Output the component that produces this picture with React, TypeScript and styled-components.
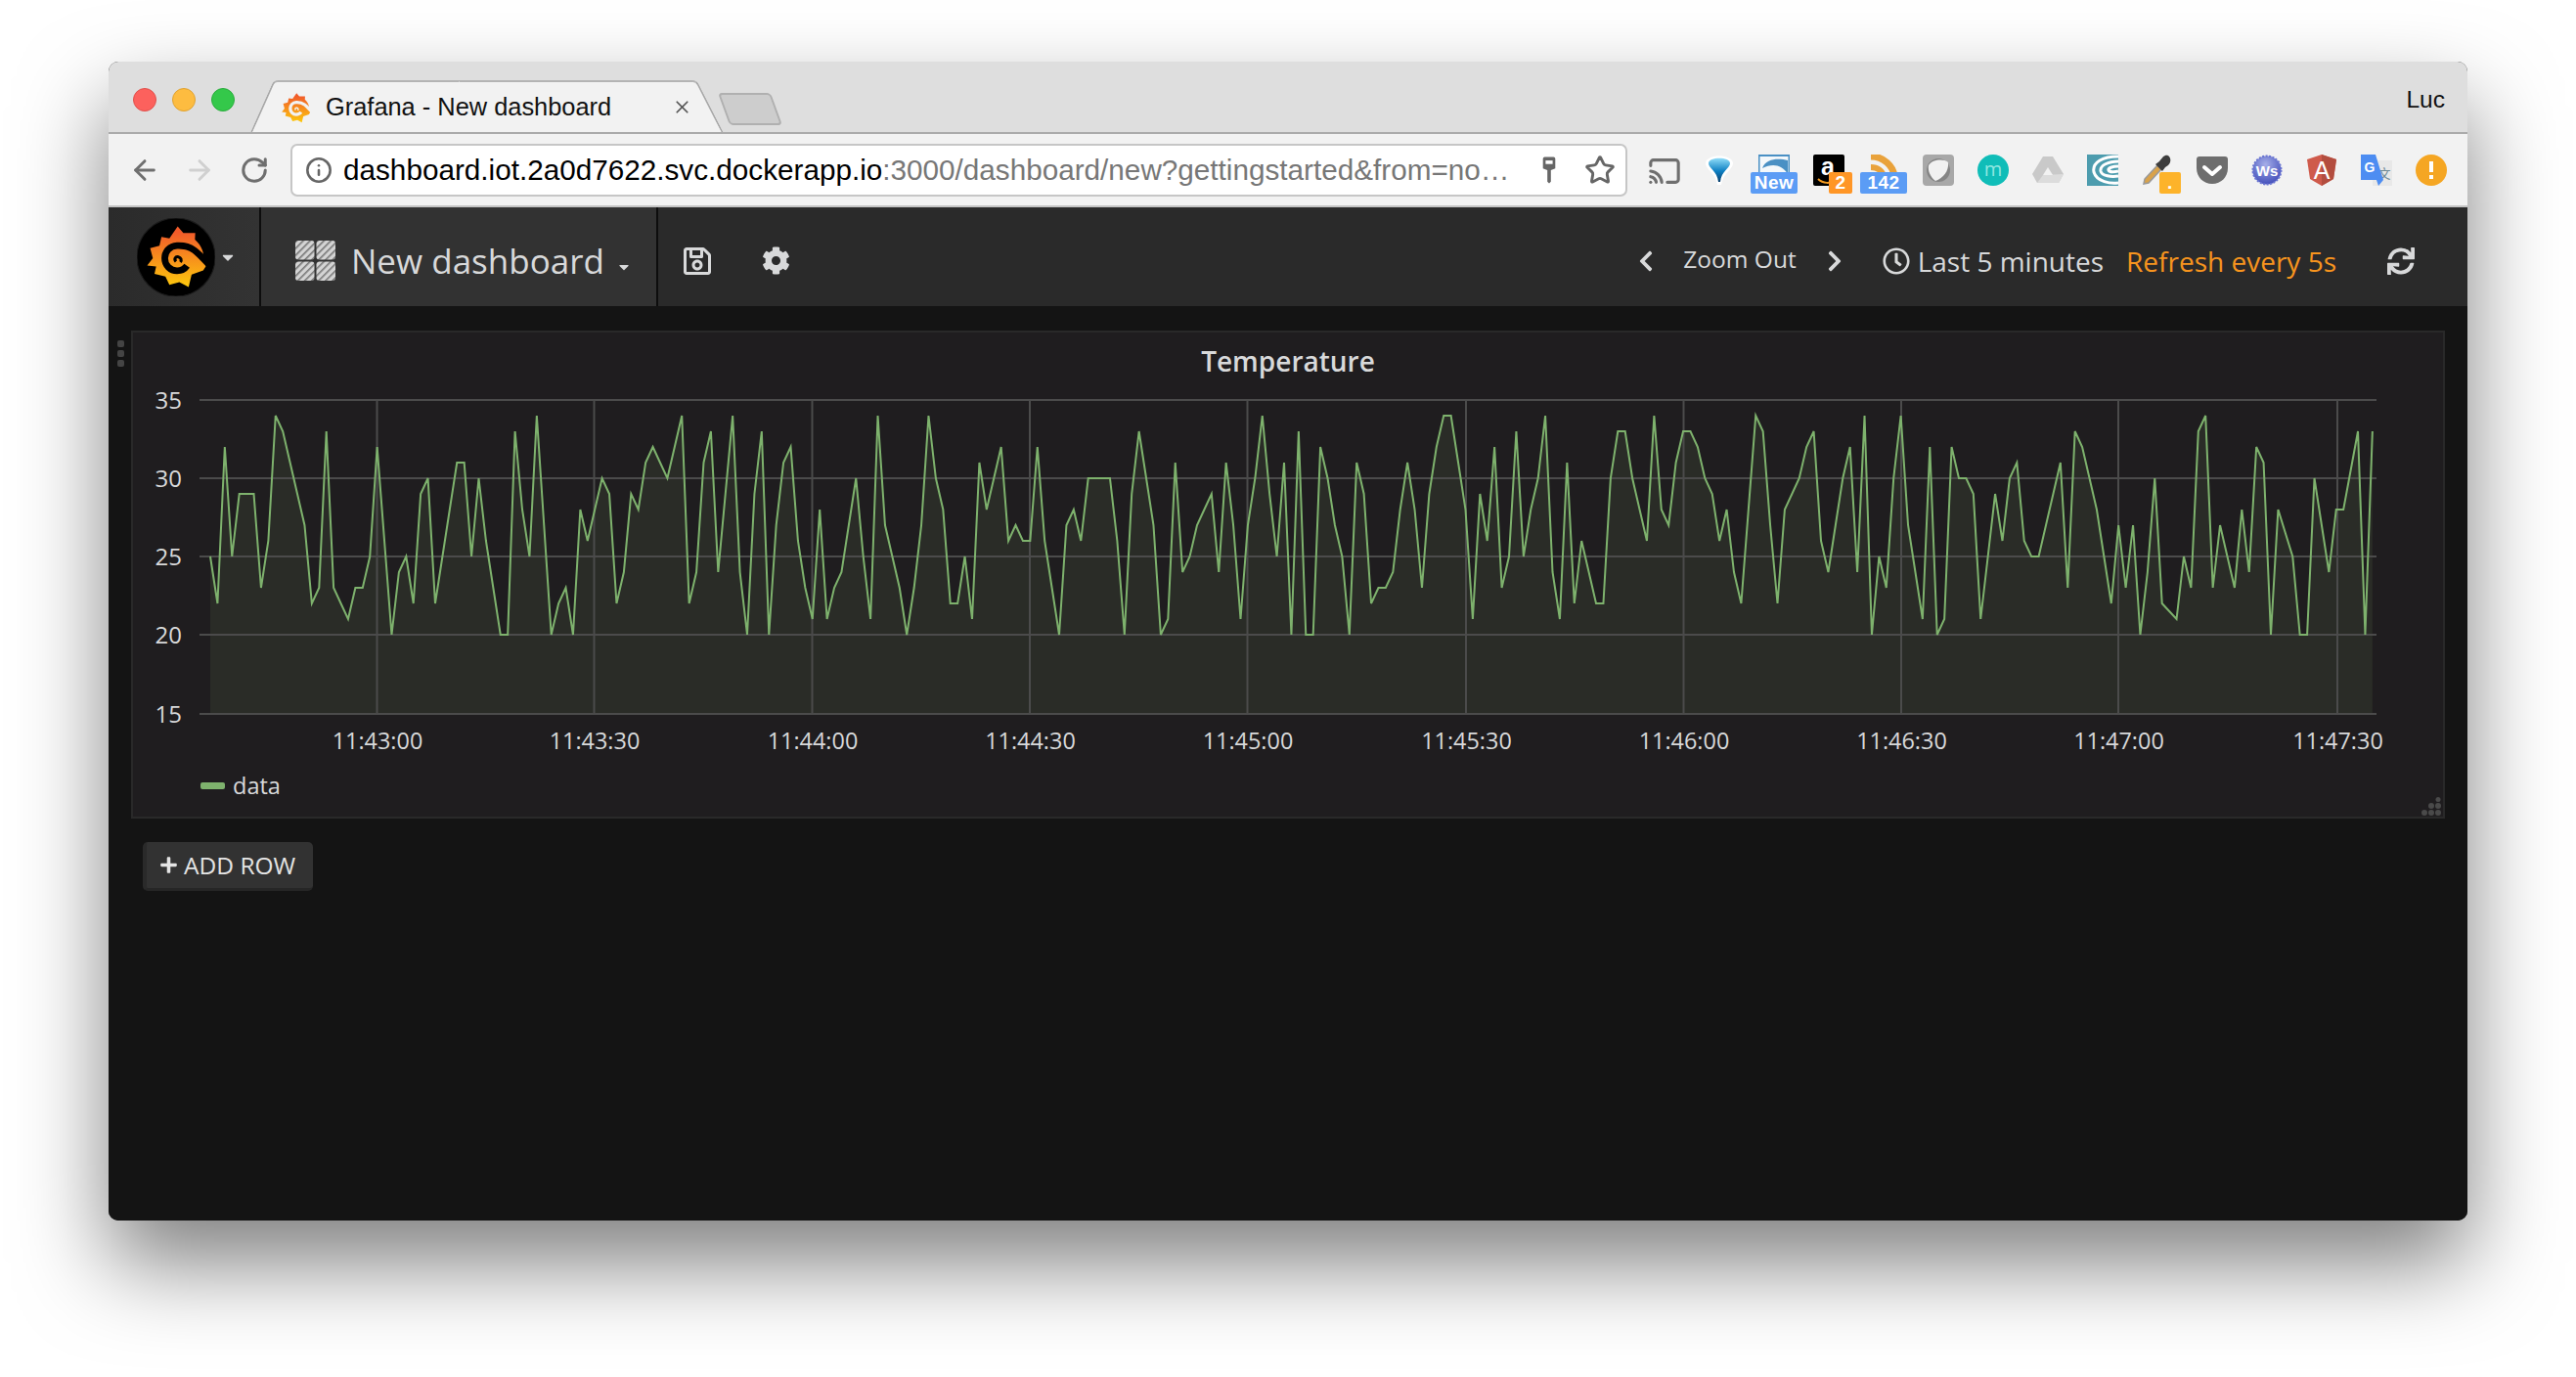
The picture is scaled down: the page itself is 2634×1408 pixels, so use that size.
import React from 'react';
import styled, { createGlobalStyle } from 'styled-components';
import { ArrowLeft, ArrowRight, Cast, Info, RotateCw, Star, X } from 'lucide-react';
import {
  FaCaretDown,
  FaChevronLeft,
  FaChevronRight,
  FaCog,
  FaPlus,
  FaRegClock,
  FaRegSave,
  FaSync,
} from 'react-icons/fa';

const GlobalStyle = createGlobalStyle`
  html, body {
    margin: 0;
    background: #fff;
    overflow: hidden;
  }
`;

const Page = styled.div`
  height: 1408px;
  padding: 63px 0 0 111px;
  box-sizing: border-box;
`;

const BrowserWindow = styled.div`
  width: 2412px;
  height: 1185px;
  display: flex;
  flex-direction: column;
  border-radius: 10px;
  background: #141414;
  box-shadow: 0 44px 90px rgba(0, 0, 0, 0.5);
`;

const TabStrip = styled.div`
  height: 74px;
  box-sizing: border-box;
  display: flex;
  align-items: flex-end;
  padding-left: 25px;
  background: #dedede;
  border-radius: 10px 10px 0 0;
  border-bottom: 2px solid #ababab;
  font-family: 'Liberation Sans', sans-serif;
`;

const TrafficLights = styled.div`
  align-self: flex-start;
  display: flex;
  gap: 16px;
  margin-top: 27px;
`;

const TrafficLight = styled.span<{ $color: string; $edge: string }>`
  width: 24px;
  height: 24px;
  box-sizing: border-box;
  border-radius: 50%;
  background: ${(props) => props.$color};
  border: 1px solid ${(props) => props.$edge};
`;

const Tab = styled.div`
  position: relative;
  width: 484px;
  height: 55px;
  margin: 0 0 -2px 16px;
  box-sizing: border-box;
  display: flex;
  align-items: center;
  padding: 0 32px 0 30px;
  font-size: 25.4px;
  color: #111;

  &::before,
  &::after {
    content: '';
    position: absolute;
    top: 0;
    bottom: 2px;
    width: 50%;
    background: #f2f2f2;
    border-top: 2px solid #b4b4b4;
  }

  &::before {
    left: 12px;
    transform: skewX(-24deg);
    border-left: 2px solid #a8a8a8;
    border-radius: 5px 0 0 0;
  }

  &::after {
    right: 14px;
    transform: skewX(27deg);
    border-right: 2px solid #a8a8a8;
    border-radius: 0 5px 0 0;
  }

  & > * {
    position: relative;
    z-index: 1;
  }
`;

const TabTitle = styled.span`
  margin-left: 15px;
  flex: 1;
  white-space: nowrap;
`;

const TabClose = styled.span`
  display: flex;
  color: #555;
`;

const NewTab = styled.div`
  width: 54px;
  height: 33px;
  margin-bottom: 7px;
  box-sizing: border-box;
  background: #cdcdcd;
  border: 2px solid #b0b0b0;
  border-radius: 4px;
  transform: skewX(20deg);
`;

const Profile = styled.span`
  margin: 6px 23px 0 auto;
  align-self: center;
  font-size: 24.5px;
  color: #111;
`;

const Toolbar = styled.div`
  height: 75px;
  box-sizing: border-box;
  display: flex;
  align-items: center;
  padding-left: 9px;
  background: #f2f2f2;
  border-bottom: 2px solid #c4c4c4;
  font-family: 'Liberation Sans', sans-serif;
`;

const NavButton = styled.span<{ $muted?: boolean }>`
  width: 56px;
  display: flex;
  justify-content: center;
  color: ${(props) => (props.$muted ? '#d0d0d0' : '#6f6f6f')};
`;

const AddressBar = styled.div`
  width: 1367px;
  height: 54px;
  margin: 0 10px 0 9px;
  box-sizing: border-box;
  display: flex;
  align-items: center;
  padding: 0 10px 0 13px;
  background: #fff;
  border: 2px solid #c6c6c6;
  border-radius: 7px;
  color: #666;
`;

const Url = styled.div`
  flex: 1;
  margin-left: 11px;
  font-size: 29.7px;
  line-height: 40px;
  white-space: nowrap;
  color: #777;

  b {
    font-weight: 400;
    color: #000;
  }
`;

const KeyIcon = styled.svg`
  width: 18px;
  height: 30px;
  margin-right: 27px;
`;

const StarIcon = styled.span`
  display: flex;
  color: #666;
`;

const Extensions = styled.div`
  display: flex;
`;

const Extension = styled.div`
  position: relative;
  width: 56px;
  height: 32px;
  display: flex;
  justify-content: center;

  svg {
    display: block;
  }
`;

const Badge = styled.span<{ $color: string; $left: number; $width: number }>`
  position: absolute;
  top: 18px;
  left: ${(props) => props.$left}px;
  width: ${(props) => props.$width}px;
  height: 22px;
  border-radius: 2px;
  background: ${(props) => props.$color};
  color: #fff;
  font: 700 19px/22px 'Liberation Sans', sans-serif;
  text-align: center;
  letter-spacing: 0.5px;
`;

const NavBar = styled.div`
  height: 101px;
  display: flex;
  align-items: stretch;
  background: #2a2a2a;
  color: #d8d9da;
  font-family: 'Open Sans', sans-serif;
`;

const LogoSection = styled.div`
  width: 156px;
  box-sizing: border-box;
  display: flex;
  align-items: center;
  padding-left: 29px;
  gap: 4px;
  background: linear-gradient(90deg, #2b2b2b, #333);
  border-right: 2px solid #0d0d0d;
`;

const LogoCaret = styled.span`
  display: flex;
  color: #d8d9da;
`;

const DashboardSection = styled.div`
  width: 406px;
  box-sizing: border-box;
  display: flex;
  align-items: center;
  padding: 8px 0 0 35px;
  background: #323232;
  border-right: 2px solid #0d0d0d;
`;

const DashboardTitle = styled.span`
  margin-left: 16px;
  font-size: 35px;
  white-space: nowrap;
`;

const TitleCaret = styled.span`
  display: flex;
  margin: 12px 0 0 12px;
`;

const ActionIcon = styled.span<{ $left: number }>`
  display: flex;
  align-items: center;
  padding-top: 8px;
  margin-left: ${(props) => props.$left}px;
`;

const RightControls = styled.div`
  margin-left: auto;
  padding: 8px 54px 0 0;
  display: flex;
  align-items: center;
`;

const ZoomLabel = styled.span`
  margin: 0 27px 0 26px;
  font-size: 24.5px;
  white-space: nowrap;
  position: relative;
  top: -2px;
`;

const ClockIcon = styled(FaRegClock)`
  margin: 0 8px 0 37px;
`;

const RangeLabel = styled.span`
  font-size: 28px;
  white-space: nowrap;
`;

const RefreshLabel = styled(RangeLabel)`
  margin: 0 52px 0 23px;
  color: #f7941e;
`;

const Dashboard = styled.div`
  flex: 1;
  position: relative;
  padding: 25px 23px 0;
  background: #141414;
  border-radius: 0 0 10px 10px;
  font-family: 'Open Sans', sans-serif;
  color: #d8d9da;
`;

const DragHandle = styled.div`
  position: absolute;
  left: 9px;
  top: 35px;
  display: flex;
  flex-direction: column;
  gap: 3px;

  span {
    width: 7px;
    height: 7px;
    border-radius: 2px;
    background: #444;
  }
`;

const Panel = styled.div`
  position: relative;
  height: 499px;
  box-sizing: border-box;
  display: flex;
  flex-direction: column;
  background: #1f1d1f;
  border: 2px solid #292929;
`;

const PanelTitle = styled.div`
  height: 55px;
  line-height: 58px;
  text-align: center;
  font-size: 28px;
  font-weight: 600;
  color: #d8d9da;
`;

const ChartSvg = styled.svg`
  display: block;
  width: 2362px;
  height: 380px;
  font-family: 'Open Sans', sans-serif;
`;

const Legend = styled.div`
  display: flex;
  align-items: center;
  gap: 8px;
  padding-left: 69px;
  margin-top: 12px;
  font-size: 23.5px;
  line-height: 32px;
`;

const LegendSwatch = styled.span`
  width: 25px;
  height: 7px;
  border-radius: 2px;
  background: #7eb26d;
`;

const ResizeHandle = styled.svg`
  position: absolute;
  right: 2px;
  bottom: 0;
  width: 20px;
  height: 20px;
`;

const AddRowButton = styled.button`
  display: flex;
  align-items: center;
  gap: 6px;
  height: 50px;
  width: 174px;
  margin: 24px 0 0 12px;
  padding: 0 0 0 13px;
  box-sizing: border-box;
  background: #323232;
  border: none;
  border-left: 4px solid #2a2a2a;
  border-bottom: 3px solid #262626;
  border-radius: 5px;
  color: #e4e4e4;
  font: 400 24.5px 'Open Sans', sans-serif;
  white-space: nowrap;
`;

const MarkSvg = styled.svg`
  flex-shrink: 0;
`;

const series = [
  25, 22, 32, 25, 29, 29, 29, 23, 26, 34, 33, 31, 29, 27, 22, 23, 33, 23, 22, 21,
  23, 23, 25, 32, 26, 20, 24, 25, 22, 29, 30, 22, 25, 28, 31, 31, 25, 30, 26, 23,
  20, 20, 33, 28, 25, 34, 27, 20, 22, 23, 20, 28, 26, 28, 30, 29, 22, 24, 29, 28,
  31, 32, 31, 30, 32, 34, 22, 24, 31, 33, 24, 29, 34, 24, 20, 29, 33, 20, 27, 31,
  32, 26, 23, 21, 28, 21, 23, 24, 27, 30, 25, 21, 34, 27, 25, 23, 20, 23, 27, 34,
  30, 28, 22, 22, 25, 21, 31, 28, 30, 32, 26, 27, 26, 26, 32, 26, 23, 20, 27, 28,
  26, 30, 30, 30, 30, 26, 20, 29, 33, 30, 27, 20, 21, 31, 24, 25, 27, 28, 29, 24,
  31, 27, 21, 27, 30, 34, 29, 25, 31, 20, 33, 20, 20, 32, 30, 27, 25, 20, 31, 29,
  22, 23, 23, 24, 28, 31, 28, 23, 29, 32, 34, 34, 31, 28, 21, 29, 26, 32, 23, 25,
  33, 25, 28, 30, 34, 24, 21, 31, 22, 26, 24, 22, 22, 30, 33, 33, 30, 28, 26, 34,
  28, 27, 31, 33, 33, 32, 30, 29, 26, 28, 24, 22, 28, 34, 33, 27, 22, 28, 29, 30,
  32, 33, 26, 24, 27, 30, 32, 24, 34, 20, 25, 23, 30, 34, 27, 24, 21, 32, 20, 21,
  32, 30, 30, 29, 21, 25, 29, 26, 30, 31, 26, 25, 25, 27, 29, 31, 23, 33, 32, 30,
  28, 25, 22, 27, 23, 27, 20, 24, 30, 22, 21.5, 21, 25, 23, 33, 34, 23, 27, 25, 23,
  28, 24, 32, 31, 20, 28, 26.5, 25, 20, 20, 30, 27, 24, 28, 28, 30.5, 33, 20, 33,
];

const xTicks = [
  { x: 385.5, label: '11:43:00' },
  { x: 607.5, label: '11:43:30' },
  { x: 830.5, label: '11:44:00' },
  { x: 1053, label: '11:44:30' },
  { x: 1275.5, label: '11:45:00' },
  { x: 1499, label: '11:45:30' },
  { x: 1721.5, label: '11:46:00' },
  { x: 1944, label: '11:46:30' },
  { x: 2166, label: '11:47:00' },
  { x: 2390, label: '11:47:30' },
];

const yTicks = [
  { y: 409, label: '35' },
  { y: 489, label: '30' },
  { y: 569, label: '25' },
  { y: 649, label: '20' },
  { y: 730, label: '15' },
];

const pointX = (index: number) => 215 + index * 7.419;
const pointY = (value: number) => 649 - (value - 20) * 16;

const linePoints = series.map((value, index) => `${pointX(index)},${pointY(value)}`).join(' ');
const areaPoints = `215,730 ${linePoints} ${pointX(series.length - 1)},730`;

const TemperatureChart: React.FC = () => (
  <ChartSvg viewBox="136 395 2362 380">
    <polygon points={areaPoints} fill="#2a2c27" />
    {yTicks.map((tick) => (
      <line key={tick.y} x1="204" x2="2430" y1={tick.y} y2={tick.y} stroke="#4b4b4b" strokeWidth="2" />
    ))}
    {xTicks.map((tick) => (
      <line key={tick.x} x1={tick.x} x2={tick.x} y1="409" y2="730" stroke="#4b4b4b" strokeWidth="2" />
    ))}
    <polyline points={linePoints} fill="none" stroke="#7eb26d" strokeWidth="2" strokeLinejoin="miter" />
    {yTicks.map((tick) => (
      <text key={tick.label} x="186" y={tick.y + 9} textAnchor="end" fontSize="24" fill="#d8d9da">
        {tick.label}
      </text>
    ))}
    {xTicks.map((tick) => (
      <text key={tick.label} x={tick.x + 0.5} y="766" textAnchor="middle" fontSize="23.4" fill="#d8d9da">
        {tick.label}
      </text>
    ))}
  </ChartSvg>
);

const GrafanaMark: React.FC<{ size: number; badge?: boolean; gradientId: string }> = ({
  size,
  badge,
  gradientId,
}) => {
  const cutout = badge ? '#000' : '#f2f2f2';
  return (
    <MarkSvg width={size} height={size} viewBox={badge ? '32 27 236 236' : '50 45 195 195'}>
      <defs>
        <linearGradient id={gradientId} x1="0" y1="0" x2="0" y2="1">
          <stop offset="0.1" stopColor="#f15b2a" />
          <stop offset="1" stopColor="#fdc90d" />
        </linearGradient>
      </defs>
      {badge && <circle cx="150" cy="145" r="118" fill="#000" stroke="#1a1a1a" strokeWidth="3" />}
      <path
        d="M155 52 L172 72 L208 72 L207 92 C222 105 232 122 233 142 L240 172 L232 185
           L197 197 L188 235 L160 220 L130 228 L118 203 L85 195 L90 173 L63 170 L80 148 L72 118 L100 110 L106 84 L130 88 Z"
        fill={`url(#${gradientId})`}
      />
      <path
        d="M250 168 C232 150 220 135 205 124 C190 113 172 109 153 110 C131 111 116 128 116 148
           C116 170 133 186 153 186 C166 186 176 181 183 171"
        fill="none"
        stroke={cutout}
        strokeWidth="20"
      />
      <path d="M150 158 C143 151 148 142 157 144 C165 146 168 154 163 160" fill="none" stroke={cutout} strokeWidth="9" />
    </MarkSvg>
  );
};

const DashboardIcon: React.FC = () => (
  <MarkSvg width="41" height="41" viewBox="0 0 41 41">
    <defs>
      <pattern id="hatch" width="5" height="5" patternUnits="userSpaceOnUse" patternTransform="rotate(45)">
        <rect width="5" height="5" fill="#d4d4d4" />
        <rect width="1.6" height="5" fill="#777" />
      </pattern>
    </defs>
    <rect x="0" y="0" width="19.5" height="19.5" rx="3" fill="url(#hatch)" />
    <rect x="21.5" y="0" width="19.5" height="19.5" rx="3" fill="url(#hatch)" />
    <rect x="0" y="21.5" width="19.5" height="19.5" rx="3" fill="url(#hatch)" />
    <rect x="21.5" y="21.5" width="19.5" height="19.5" rx="3" fill="url(#hatch)" />
  </MarkSvg>
);

const BalloonIcon = () => (
  <svg width="32" height="32" viewBox="0 0 32 32">
    <defs>
      <linearGradient id="balloon" x1="0" y1="0" x2="0" y2="1">
        <stop offset="0" stopColor="#8fdcf8" />
        <stop offset="0.55" stopColor="#0d7fc2" />
        <stop offset="1" stopColor="#0a3f6d" />
      </linearGradient>
    </defs>
    <path d="M2 9 C2 -1 30 -1 30 9 C30 15 20 19 18 31 L14 31 C12 19 2 15 2 9 Z" fill="#fff" />
    <path d="M5 9 C5 2 27 2 27 9 C27 14 18 17 17 28 L15 28 C14 17 5 14 5 9 Z" fill="url(#balloon)" />
  </svg>
);

const SwooshIcon = () => (
  <svg width="32" height="32" viewBox="0 0 32 32">
    <rect x="0" y="0" width="32" height="32" fill="#4a90c4" />
    <rect x="1.5" y="2" width="29" height="30" fill="#f4f8fb" />
    <path d="M4 14 C8 3 22 4 30 6 L30 20 C24 10 14 9 4 14 Z" fill="#4a90c4" />
  </svg>
);

const AmazonIcon = () => (
  <svg width="32" height="32" viewBox="0 0 32 32">
    <rect width="32" height="32" rx="2" fill="#000" />
    <text x="15" y="21" textAnchor="middle" fontFamily="Liberation Sans, sans-serif" fontWeight="700" fontSize="25" fill="#fff">
      a
    </text>
    <path d="M5 25 C10 30 18 30 23 26" fill="none" stroke="#f29a1f" strokeWidth="2" />
  </svg>
);

const RssIcon = () => (
  <svg width="32" height="32" viewBox="0 0 32 32">
    <path d="M3 2 C16 2 26 12 27 22" fill="none" stroke="#e9a23b" strokeWidth="7" />
    <path d="M3 13 C10 13 15 17 16 22" fill="none" stroke="#e9a23b" strokeWidth="6" />
  </svg>
);

const ShieldTileIcon = () => (
  <svg width="32" height="32" viewBox="0 0 32 32">
    <rect width="32" height="32" rx="4" fill="#a8a8a8" />
    <circle cx="16" cy="16" r="12" fill="#858585" />
    <path d="M6 11 C10 5 21 4 26 8 C27 17 21 24 13 27 C8 23 5 17 6 11 Z" fill="#f1f1f1" />
  </svg>
);

const MercuryIcon = () => (
  <svg width="32" height="32" viewBox="0 0 32 32">
    <circle cx="16" cy="16" r="16" fill="#10bdb8" />
    <text x="16" y="22" textAnchor="middle" fontFamily="Open Sans, sans-serif" fontSize="20" fill="#8fe7e0">
      m
    </text>
  </svg>
);

const DriveIcon = () => (
  <svg width="32" height="32" viewBox="0 0 32 32">
    <path d="M11 2 L21 2 L32 20 L27 29 L5 29 L0 20 Z" fill="#c9c9c9" />
    <path d="M11 21 L32 20 L27 29 L5 29 Z" fill="#dcdcdc" />
    <path d="M16 13 L21 21 L11 21 Z" fill="#f2f2f2" />
  </svg>
);

const SpiralIcon = () => (
  <svg width="32" height="32" viewBox="0 0 32 32">
    <rect width="32" height="32" fill="#4d9cae" />
    <path d="M32 2 C16 2 5 8 7 18 C10 28 24 30 32 29" fill="none" stroke="#fff" strokeWidth="3" />
    <path d="M32 7 C22 7 13 11 14 17 C15 22 25 23 32 22" fill="none" stroke="#fff" strokeWidth="3" />
    <path d="M32 12 C26 12 21 14 22 16 C23 18 28 18 32 17" fill="none" stroke="#fff" strokeWidth="3" />
  </svg>
);

const DropperIcon = () => (
  <svg width="32" height="32" viewBox="0 0 32 32">
    <path d="M2 30 L3 25 L16 11 L20 15 L7 29 Z" fill="#d9a24a" stroke="#999" strokeWidth="1.5" />
    <path d="M14 10 L21 17 L24 13 L27 11 C32 6 28 -1 24 1 C21 2 20 5 18 7 Z" fill="#3d3d3d" />
  </svg>
);

const PocketIcon = () => (
  <svg width="32" height="32" viewBox="0 0 32 32">
    <path d="M0 5 C0 3 1 2 3 2 L29 2 C31 2 32 3 32 5 L32 14 C32 23 25 30 16 30 C7 30 0 23 0 14 Z" fill="#6e6e6e" />
    <path d="M8 13 L16 20 L24 13" fill="none" stroke="#fff" strokeWidth="4" strokeLinecap="round" strokeLinejoin="round" />
  </svg>
);

const SealIcon = () => (
  <svg width="32" height="32" viewBox="0 0 32 32">
    <defs>
      <radialGradient id="seal" cx="0.45" cy="0.3" r="0.75">
        <stop offset="0" stopColor="#a6afe8" />
        <stop offset="1" stopColor="#3d49b8" />
      </radialGradient>
    </defs>
    <circle cx="16" cy="16" r="14.5" fill="url(#seal)" stroke="#6a75d2" strokeWidth="2" strokeDasharray="2 1.5" />
    <text x="16" y="22" textAnchor="middle" fontFamily="Liberation Sans, sans-serif" fontWeight="700" fontSize="15" fill="#fff">
      Ws
    </text>
  </svg>
);

const AngularIcon = () => (
  <svg width="32" height="32" viewBox="0 0 32 32">
    <path d="M16 0 L31 5 L28 25 L16 32 L4 25 L1 5 Z" fill="#cf5a4b" />
    <path d="M16 0 L31 5 L28 25 L16 32 Z" fill="#b34d3f" />
    <text x="16" y="25" textAnchor="middle" fontFamily="Liberation Sans, sans-serif" fontSize="25" fill="#fff">
      A
    </text>
  </svg>
);

const TranslateIcon = () => (
  <svg width="32" height="32" viewBox="0 0 32 32">
    <rect x="12" y="6" width="20" height="26" fill="#e8e8e8" />
    <text x="24" y="24" textAnchor="middle" fontFamily="Noto Sans CJK SC, sans-serif" fontSize="13" fill="#6f8a96">
      文
    </text>
    <path d="M0 0 L15 0 L23 26 L18 32 L16 26 L0 26 Z" fill="#4d8df2" />
    <text x="9" y="18" textAnchor="middle" fontFamily="Liberation Sans, sans-serif" fontWeight="700" fontSize="14" fill="#fff">
      G
    </text>
  </svg>
);

const AlertIcon = () => (
  <svg width="32" height="32" viewBox="0 0 32 32">
    <circle cx="16" cy="16" r="16" fill="#f5a623" />
    <rect x="14" y="7" width="4" height="11" fill="#fff" />
    <rect x="14" y="21" width="4" height="4" fill="#fff" />
  </svg>
);

const App: React.FC = () => (
  <Page>
    <GlobalStyle />
    <BrowserWindow>
      <TabStrip>
        <TrafficLights>
          <TrafficLight $color="#fc615d" $edge="#e0514c" />
          <TrafficLight $color="#fdbc40" $edge="#e0a331" />
          <TrafficLight $color="#34c84a" $edge="#2aad3d" />
        </TrafficLights>
        <Tab>
          <GrafanaMark size={32} gradientId="favicon-gradient" />
          <TabTitle>Grafana - New dashboard</TabTitle>
          <TabClose>
            <X size={21} strokeWidth={2} />
          </TabClose>
        </Tab>
        <NewTab />
        <Profile>Luc</Profile>
      </TabStrip>

      <Toolbar>
        <NavButton>
          <ArrowLeft size={32} strokeWidth={2.2} />
        </NavButton>
        <NavButton $muted>
          <ArrowRight size={32} strokeWidth={2.2} />
        </NavButton>
        <NavButton>
          <RotateCw size={30} strokeWidth={2.4} />
        </NavButton>
        <AddressBar>
          <Info size={28} strokeWidth={2.2} />
          <Url>
            <b>dashboard.iot.2a0d7622.svc.dockerapp.io</b>:3000/dashboard/new?gettingstarted&amp;from=no…
          </Url>
          <KeyIcon viewBox="0 0 20 30">
            <path d="M3 2 C3 1 4 0 5 0 L15 0 C16 0 17 1 17 2 L17 13 L12 15 L12 28 L10 30 L8 28 L8 15 L3 13 Z" fill="#666" />
            <rect x="6" y="4" width="8" height="4" fill="#fff" />
          </KeyIcon>
          <StarIcon>
            <Star size={32} strokeWidth={2.2} />
          </StarIcon>
        </AddressBar>
        <Extensions>
          <Extension>
            <Cast size={34} strokeWidth={2.2} color="#6f6f6f" />
          </Extension>
          <Extension>
            <BalloonIcon />
          </Extension>
          <Extension>
            <SwooshIcon />
            <Badge $color="#5b9cf5" $left={4} $width={48}>New</Badge>
          </Extension>
          <Extension>
            <AmazonIcon />
            <Badge $color="#ff9626" $left={28} $width={24}>2</Badge>
          </Extension>
          <Extension>
            <RssIcon />
            <Badge $color="#5b9cf5" $left={4} $width={48}>142</Badge>
          </Extension>
          <Extension>
            <ShieldTileIcon />
          </Extension>
          <Extension>
            <MercuryIcon />
          </Extension>
          <Extension>
            <DriveIcon />
          </Extension>
          <Extension>
            <SpiralIcon />
          </Extension>
          <Extension>
            <DropperIcon />
            <Badge $color="#fdb32a" $left={30} $width={22}>.</Badge>
          </Extension>
          <Extension>
            <PocketIcon />
          </Extension>
          <Extension>
            <SealIcon />
          </Extension>
          <Extension>
            <AngularIcon />
          </Extension>
          <Extension>
            <TranslateIcon />
          </Extension>
          <Extension>
            <AlertIcon />
          </Extension>
        </Extensions>
      </Toolbar>

      <NavBar>
        <LogoSection>
          <GrafanaMark size={80} badge gradientId="logo-gradient" />
          <LogoCaret>
            <FaCaretDown size={18} />
          </LogoCaret>
        </LogoSection>
        <DashboardSection>
          <DashboardIcon />
          <DashboardTitle>New dashboard</DashboardTitle>
          <TitleCaret>
            <FaCaretDown size={16} />
          </TitleCaret>
        </DashboardSection>
        <ActionIcon $left={24}>
          <FaRegSave size={32} />
        </ActionIcon>
        <ActionIcon $left={50}>
          <FaCog size={29} />
        </ActionIcon>
        <RightControls>
          <FaChevronLeft size={24} />
          <ZoomLabel>Zoom Out</ZoomLabel>
          <FaChevronRight size={24} />
          <ClockIcon size={28} />
          <RangeLabel>Last 5 minutes</RangeLabel>
          <RefreshLabel>Refresh every 5s</RefreshLabel>
          <FaSync size={28} />
        </RightControls>
      </NavBar>

      <Dashboard>
        <DragHandle>
          <span />
          <span />
          <span />
        </DragHandle>
        <Panel>
          <PanelTitle>Temperature</PanelTitle>
          <TemperatureChart />
          <Legend>
            <LegendSwatch />
            data
          </Legend>
          <ResizeHandle viewBox="0 0 20 20">
            <g fill="#4a4a4a">
              <circle cx="3" cy="16" r="3" />
              <circle cx="10" cy="16" r="3" />
              <circle cx="17" cy="16" r="3" />
              <circle cx="10" cy="9" r="3" />
              <circle cx="17" cy="9" r="3" />
              <circle cx="17" cy="2.5" r="2.5" />
            </g>
          </ResizeHandle>
        </Panel>
        <AddRowButton>
          <FaPlus size={19} />
          ADD ROW
        </AddRowButton>
      </Dashboard>
    </BrowserWindow>
  </Page>
);

export default App;
